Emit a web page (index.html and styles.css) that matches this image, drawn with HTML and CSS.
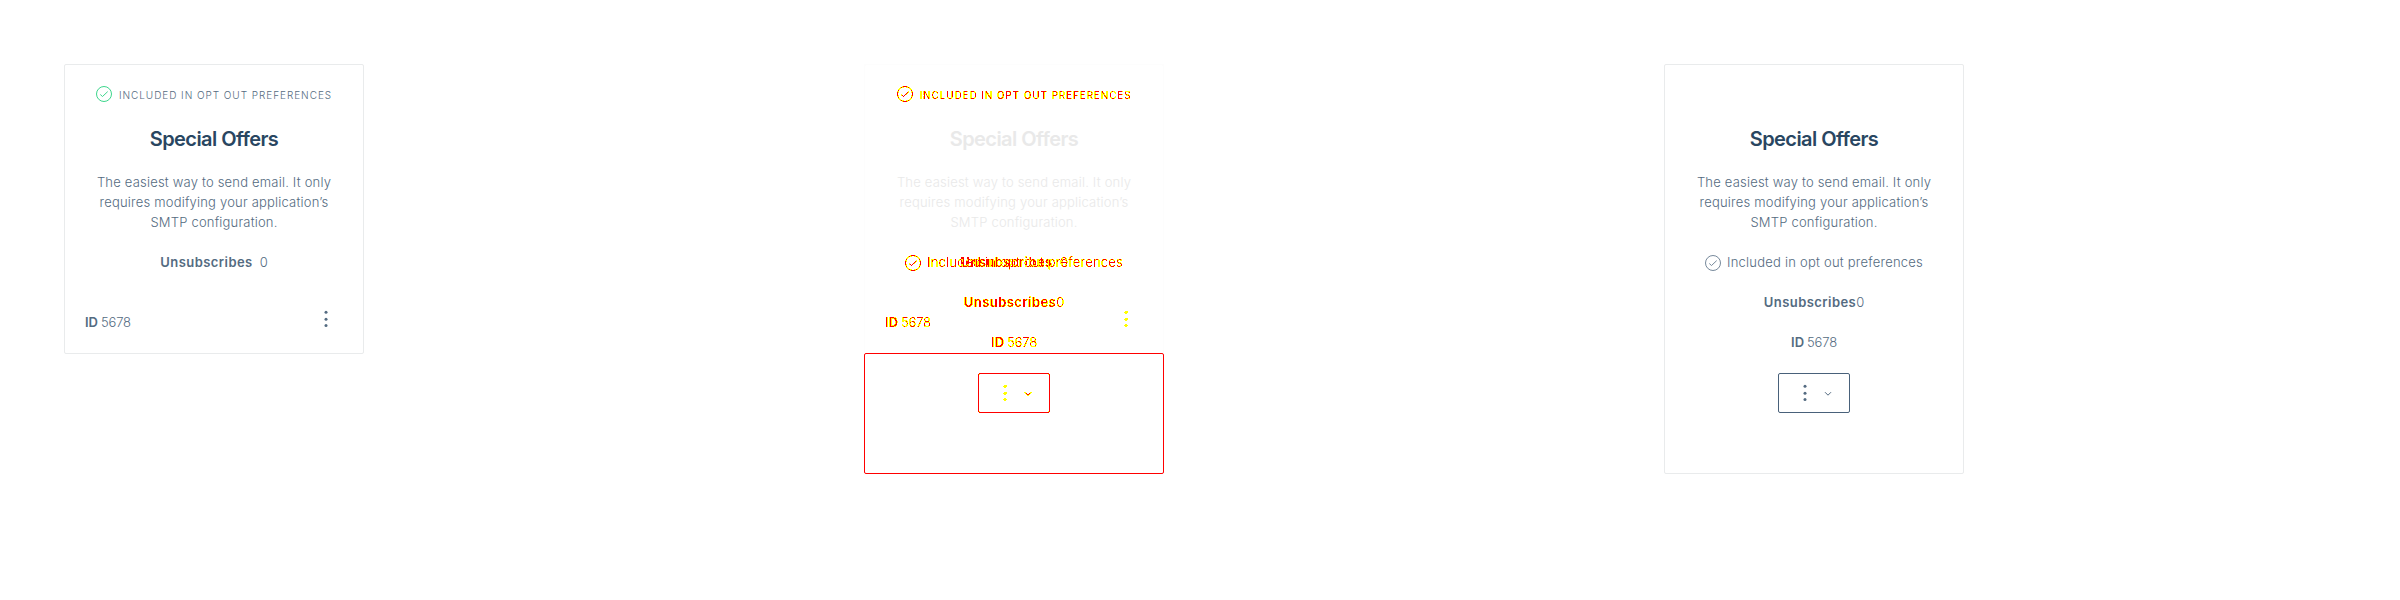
FILE: index.html
```html
<!DOCTYPE html>
<html lang="en">
<head>
<meta charset="utf-8">
<title>Special Offers</title>
<link rel="stylesheet" href="styles.css">
</head>
<body>
<svg class="defs" width="0" height="0" aria-hidden="true">
  <filter id="changed" x="0" y="0" width="1" height="1" color-interpolation-filters="sRGB">
    <feColorMatrix values="0 0 0 0 1  0 0 0 1 0  0 0 0 0 0  0 0 0 1 0"/>
    <feComponentTransfer>
      <feFuncG type="discrete" tableValues="1 1 1 1 1 1 1 0 0 0"/>
      <feFuncA type="discrete" tableValues="0 1 1 1 1 1 1 1"/>
    </feComponentTransfer>
  </filter>
  <symbol id="check" viewBox="0 0 16 16"><circle cx="8" cy="8" r="7.5"/><path d="M4.3 8.5 6.5 10.5 11.7 5.6"/></symbol>
  <symbol id="dots" viewBox="0 0 4 18"><circle cx="2" cy="2.3" r="1.5"/><circle cx="2" cy="9.2" r="1.5"/><circle cx="2" cy="15.6" r="1.5"/></symbol>
  <symbol id="chevron" viewBox="0 0 8 6"><path d="M1 1.2 4 4.2 7 1.2"/></symbol>
</svg>
<main class="board">
  <section class="pane">
    <article class="card">
      <div class="badge green"><svg class="check"><use href="#check"/></svg><span>INCLUDED IN OPT OUT PREFERENCES</span></div>
      <h2 class="title">Special Offers</h2>
      <p class="copy">The easiest way to send email. It only<br>requires modifying your application’s<br>SMTP configuration.</p>
      <div class="stat spaced"><b>Unsubscribes</b><span>0</span></div>
      <div class="foot"><div class="ident"><b>ID</b><span>5678</span></div><svg class="dots"><use href="#dots"/></svg></div>
    </article>
  </section>
  <section class="pane stack">
    <article class="card ghost">
      <div class="badge blank"></div>
      <h2 class="title">Special Offers</h2>
      <p class="copy">The easiest way to send email. It only<br>requires modifying your application’s<br>SMTP configuration.</p>
    </article>
    <div class="layer changed">
      <div class="badge"><svg class="check"><use href="#check"/></svg><span>INCLUDED IN OPT OUT PREFERENCES</span></div>
      <div class="gap"></div>
      <div class="stat spaced"><b>Unsubscribes</b><span>0</span></div>
      <div class="foot"><div class="ident"><b>ID</b><span>5678</span></div><svg class="dots"><use href="#dots"/></svg></div>
    </div>
    <div class="layer changed">
      <div class="badge blank"></div>
      <div class="gap"></div>
      <div class="included"><svg class="check"><use href="#check"/></svg><span>Included in opt out preferences</span></div>
      <div class="stat"><b>Unsubscribes</b><span>0</span></div>
      <div class="ident"><b>ID</b><span>5678</span></div>
      <div class="button"><svg class="dots"><use href="#dots"/></svg><svg class="chevron"><use href="#chevron"/></svg></div>
    </div>
    <div class="growth"></div>
  </section>
  <section class="pane">
    <article class="card tall">
      <div class="badge blank"></div>
      <h2 class="title">Special Offers</h2>
      <p class="copy">The easiest way to send email. It only<br>requires modifying your application’s<br>SMTP configuration.</p>
      <div class="included"><svg class="check"><use href="#check"/></svg><span>Included in opt out preferences</span></div>
      <div class="stat"><b>Unsubscribes</b><span>0</span></div>
      <div class="ident"><b>ID</b><span>5678</span></div>
      <div class="button"><svg class="dots"><use href="#dots"/></svg><svg class="chevron"><use href="#chevron"/></svg></div>
    </article>
  </section>
</main>
</body>
</html>
```
FILE: styles.css
```css
* { box-sizing: border-box; }
body { margin: 0; background: #fff; color: #546b81; font: 300 13px/20px Inter, "Liberation Sans", sans-serif; }
.defs { position: absolute; }
.board { display: grid; grid-template-columns: repeat(3, 800px); height: 600px; }
.pane { padding: 64px; display: grid; grid-template-columns: 300px; align-content: start; }
.card, .layer { width: 300px; height: 290px; padding: 20px; border: 1px solid #e9ebec; border-radius: 2px; display: flex; flex-direction: column; align-items: center; gap: 20px; }
.card.tall { height: 410px; }
.stack > * { grid-area: 1 / 1; }
.layer { height: 410px; border-color: transparent; }
.card.ghost { height: 410px; border-color: #fdfdfd; color: #e9e9e9; }
.changed { color: #000; filter: url(#changed); }
.growth { height: 121px; border: 1px solid #f00; border-radius: 2px; align-self: end; }
b { font-weight: 600; letter-spacing: .45px; }
svg { flex: none; fill: none; stroke: currentColor; stroke-width: 1; }
.badge { height: 20px; display: flex; align-items: center; gap: 7px; font-size: 10px; letter-spacing: .95px; white-space: nowrap; }
.badge span { margin-top: -1px; }
.changed .badge { font-weight: 400; letter-spacing: .87px; }
.badge .check { margin-top: -2px; }
.green .check { color: #3dd68c; }
.check { width: 16px; height: 16px; }
.title { margin: 0; height: 28px; font-size: 20px; line-height: 28px; font-weight: 600; letter-spacing: -.55px; color: #294661; }
.ghost .title { color: #e9e9e9; }
.copy { margin: 0; height: 60px; text-align: center; letter-spacing: .2px; white-space: nowrap; line-height: 20px; }
.copy, .stat, .ident { margin-top: -1px; margin-bottom: 1px; }
.gap { height: 108px; flex: none; }
.stat, .ident { display: flex; height: 20px; }
.spaced { gap: 7px; }
.ident { gap: 3px; letter-spacing: -.2px; }
.ident b { letter-spacing: 0; }
.foot { align-self: stretch; margin-top: 20px; display: flex; justify-content: space-between; }
.foot .dots { margin: -3px 15px 0 0; }
.dots { width: 4px; height: 18px; fill: currentColor; stroke: none; }
.included { height: 20px; display: flex; align-items: center; gap: 6px; letter-spacing: .23px; white-space: nowrap; }
.included span { margin-top: -2px; }
.included .check { stroke-width: .8; }
.changed .check { stroke-width: 1; }
.changed .dots { fill-opacity: .65; }
.changed .chevron { stroke-width: .9; }
.button { width: 72px; height: 40px; flex: none; border: 1px solid #49617a; border-radius: 2px; display: flex; align-items: center; padding-left: 24px; gap: 17px; }
.changed .button { border-color: #000; }
.chevron { width: 8px; height: 6px; margin-top: 1px; }
```
